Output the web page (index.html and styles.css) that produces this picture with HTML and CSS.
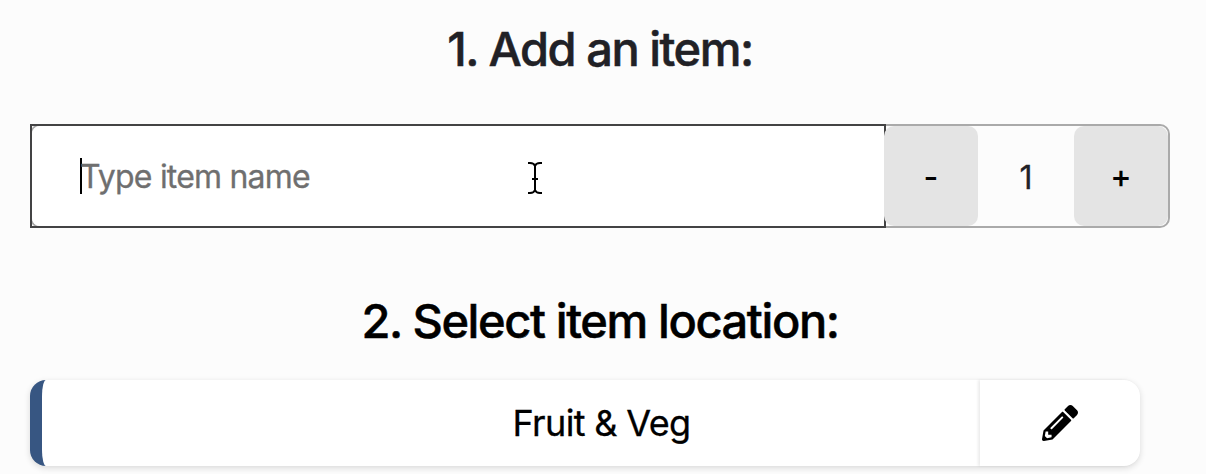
FILE: index.html
```html
<!DOCTYPE html>
<html lang="en">
<head>
<meta charset="utf-8">
<title>Add an item</title>
<link rel="stylesheet" href="styles.css">
</head>
<body>
<main class="page">
  <h2 class="heading heading-add"><span>1. Add an item:</span></h2>
  <div class="entry">
    <div class="field">
      <div class="field-fill"><span class="caret"></span><span class="placeholder">Type item name</span></div>
      <svg class="pointer" width="16" height="34" viewBox="0 0 16 34" fill="none" stroke="#000" stroke-width="2"><path d="M1 2H3Q7 2 8 5Q9 2 13 2H15M8 4V30M1 32H3Q7 32 8 29Q9 32 13 32H15M5 18H11"/></svg>
    </div>
    <button class="step" type="button"><span class="minus">-</span></button>
    <span class="count">1</span>
    <button class="step" type="button"><span class="plus">+</span></button>
  </div>
  <h2 class="heading heading-location"><span>2. Select item location:</span></h2>
  <div class="location">
    <div class="location-name"><span>Fruit &amp; Veg</span></div>
    <div class="edit">
      <svg width="36" height="36" viewBox="0 0 512 512"><path d="M497.9 142.1l-46.1 46.1c-4.7 4.7-12.3 4.7-17 0l-111-111c-4.7-4.7-4.7-12.3 0-17l46.1-46.1c18.7-18.7 49.1-18.7 67.9 0l60.1 60.1c18.8 18.7 18.8 49.1 0 67.9zM284.2 99.8L21.6 362.4.4 483.9c-2.9 16.4 11.4 30.6 27.8 27.8l121.5-21.3 262.6-262.6c4.7-4.7 4.7-12.3 0-17l-111-111c-4.8-4.7-12.4-4.7-17.1 0zM124.1 339.9c-5.5-5.5-5.5-14.3 0-19.8l154-154c5.5-5.5 14.3-5.5 19.8 0s5.5 14.3 0 19.8l-154 154c-5.5 5.5-14.3 5.5-19.8 0zM88 424h48v36.3l-64.5 11.3-31.1-31.1L51.7 376H88v48z"/></svg>
    </div>
  </div>
</main>
</body>
</html>
```
FILE: styles.css
```css
* { box-sizing: border-box; }
body {
  margin: 0;
  background: #fcfcfc;
  color: #000;
  font-family: Inter, "Liberation Sans", sans-serif;
  overflow: hidden;
}
.page { width: 1200px; height: 474px; padding: 20px 30px 0; }
.heading {
  margin: 0;
  height: 60px;
  line-height: 58px;
  font-size: 47px;
  font-weight: 500;
  text-align: center;
  white-space: nowrap;
  -webkit-text-stroke: 0.5px currentColor;
}
.heading-add { color: #212126; letter-spacing: -1.5px; }
.heading-location { margin-top: 64px; letter-spacing: -1.4px; }
.entry {
  display: flex;
  height: 104px;
  margin-top: 44px;
  border: 2px solid #aaa;
  border-radius: 10px;
}
.field { position: relative; width: 852px; box-shadow: 0 0 0 2px #434344; }
.field-fill {
  display: flex;
  align-items: center;
  height: 100%;
  padding-left: 48px;
  background: #fff;
  border-radius: 8px 0 0 8px;
}
.caret { width: 2px; height: 36px; background: #000; }
.placeholder {
  margin-left: -2px;
  padding-top: 2px;
  color: #6f6f6f;
  font-size: 32px;
  line-height: 40px;
  letter-spacing: -0.8px;
  -webkit-text-stroke: 0.3px currentColor;
}
.pointer { position: absolute; left: 495px; top: 35px; }
.step {
  position: relative;
  width: 94px;
  padding: 2px 0 0;
  border: 0;
  border-radius: 10px;
  background: #e4e4e4;
  color: #000;
  font: 500 32px/40px Inter, "Liberation Sans", sans-serif;
}
.count {
  width: 96px;
  color: #212126;
  font-size: 32px;
  line-height: 103px;
  text-align: center;
  -webkit-text-stroke: 0.3px currentColor;
}
.location {
  display: flex;
  width: 1110px;
  height: 86px;
  margin-top: 28px;
  border-left: 12px solid #375682;
  border-radius: 16px;
  background: #fff;
  box-shadow: 0 2px 6px rgba(0, 0, 0, .14);
}
.location-name {
  width: 938px;
  padding-left: 181px;
  font-size: 36px;
  line-height: 87px;
  letter-spacing: -0.65px;
  text-align: center;
  -webkit-text-stroke: 0.3px currentColor;
}
.edit {
  display: flex;
  flex: 1;
  align-items: center;
  justify-content: center;
  border-radius: 0 16px 16px 0;
  box-shadow: -2px 0 3px rgba(0, 0, 0, .08);
}
```
